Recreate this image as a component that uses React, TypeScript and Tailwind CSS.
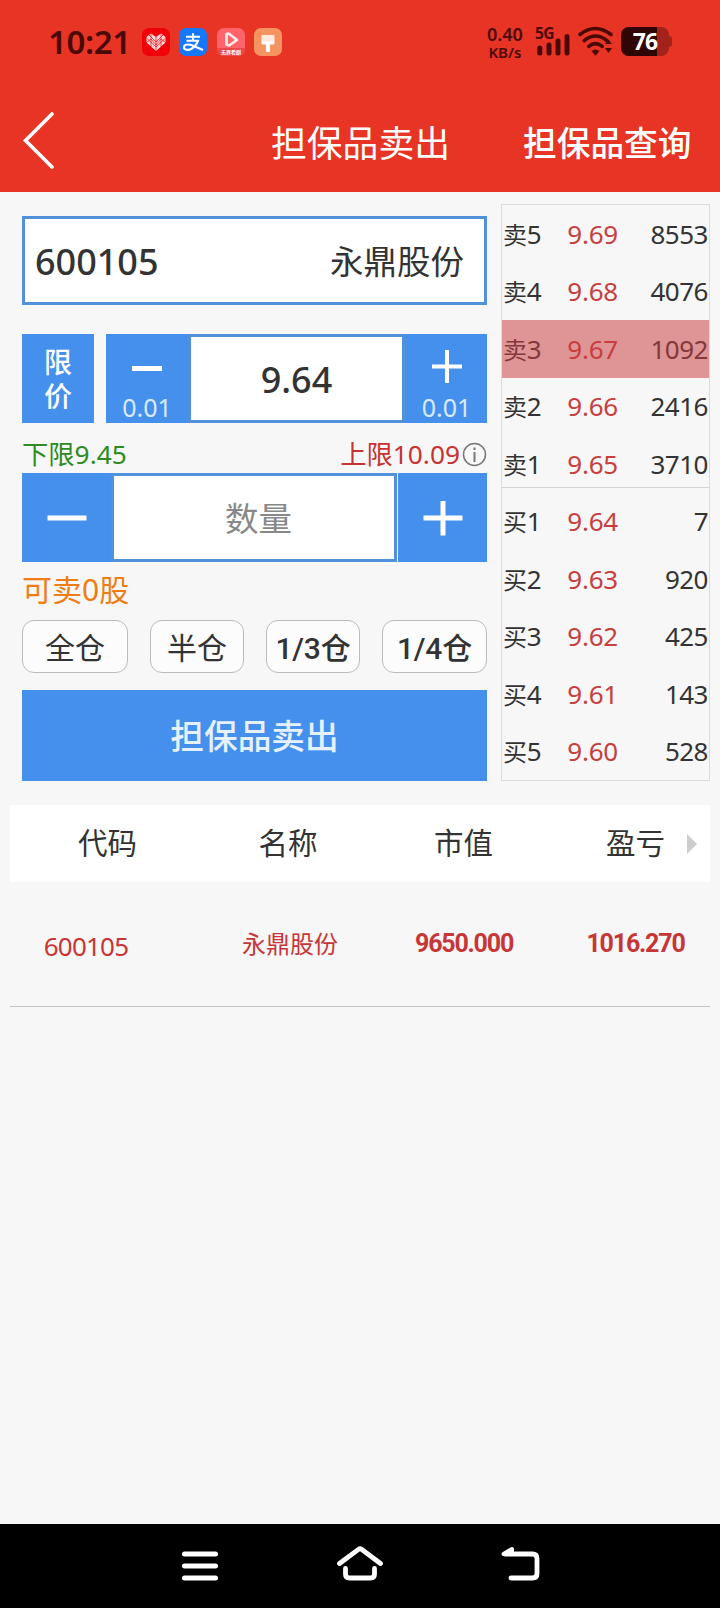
import React from "react";

const sells = [
  { label: "卖5", price: "9.69", volume: "8553" },
  { label: "卖4", price: "9.68", volume: "4076" },
  { label: "卖3", price: "9.67", volume: "1092", active: true },
  { label: "卖2", price: "9.66", volume: "2416" },
  { label: "卖1", price: "9.65", volume: "3710" },
];

const buys = [
  { label: "买1", price: "9.64", volume: "7" },
  { label: "买2", price: "9.63", volume: "920" },
  { label: "买3", price: "9.62", volume: "425" },
  { label: "买4", price: "9.61", volume: "143" },
  { label: "买5", price: "9.60", volume: "528" },
];

type Quote = { label: string; price: string; volume: string; active?: boolean };

function StatusBar() {
  return (
    <div className="flex h-[84px] items-start text-[#4a0905]">
      <div className="ml-[48px] mt-[22px] w-[80px] whitespace-nowrap text-[33px] leading-[40px] font-semibold tracking-[-0.4px]">10:21</div>
      <div className="ml-[14px] mt-[28px] flex gap-[9.3px]">
        <svg width="28" height="28" viewBox="0 0 28 28">
          <rect width="28" height="28" rx="7" fill="#f00109" />
          <path d="M14 23 4.500 14.500V9L9 5.500 14 9l5-3.500L23.500 9v5.500Z" fill="#ffd9d9" />
          <path d="m4.500 10 9.500 9 9.500-9M7 7l7 7 7-7M14 9v14M4.500 14.500 9 11l5 6 5-6 4.500 3.500M9 6v13M19 6v13" fill="none" stroke="#f00109" strokeWidth="0.7" />
        </svg>
        <svg width="28" height="28" viewBox="0 0 28 28">
          <rect width="28" height="28" rx="7" fill="#1677ff" />
          <path d="M7 8.700h14M14 5.200v7M7.500 12.700H19c-1.200 3.600-3.200 6-6 7.800-3.200 2-8 1.900-8-1.200 0-3.400 5-3.400 9-1.600l10 4.300" fill="none" stroke="#fff" strokeWidth="2.100" />
        </svg>
        <svg width="28" height="28" viewBox="0 0 28 28">
          <rect width="28" height="28" rx="7" fill="#ff646d" />
          <path d="M0 20h28v1a7 7 0 0 1-7 7H7a7 7 0 0 1-7-7Z" fill="#e9474c" />
          <path d="M9.500 6v10.500l2.500 1 8-5.500-8.500-6.500Z" fill="none" stroke="#ffeaea" strokeWidth="2.700" strokeLinejoin="round" />
          <text x="14" y="26.300" fontSize="5" fontWeight="700" fill="#fff" textAnchor="middle">无界看剧</text>
        </svg>
        <svg width="28" height="28" viewBox="0 0 28 28">
          <rect width="28" height="28" rx="7" fill="#f69461" />
          <path d="M7.500 7h13v7h-13Z" fill="#ffe9de" />
          <path d="M7.500 13.500h13V15q0 1.500-1.500 1.500h-3V23q0 1-1 1h-2q-1 0-1-1v-6.500H9q-1.500 0-1.500-1.500Z" fill="#fff" />
        </svg>
      </div>
      <div className="ml-[204.500px] mt-[25px] w-[37px] text-center font-semibold">
        <div className="text-[18px] leading-[18px]">0.40</div>
        <div className="whitespace-nowrap text-[15px] leading-[18px]">KB/s</div>
      </div>
      <svg className="ml-[11px] mt-[22px] overflow-visible" width="39" height="36" viewBox="-1 -4 39 36">
        <text x="0" y="12.500" fontSize="15.500" fontWeight="700" fill="#4a0905" letterSpacing="-0.500">5G</text>
        <path d="M4.800 22v5M14 19v8M23 15v12M32 10.500v16.500" stroke="#4a0905" strokeWidth="5" strokeLinecap="round" />
      </svg>
      <svg className="ml-[4px] mt-[26px]" width="38" height="32" viewBox="0 0 38 32">
        <path d="M3 8.500q15-12 31 0M7.300 14.500q11.200-9 22.400 0M11.800 20.300q6.700-5.500 13.400 0" fill="none" stroke="#4a0905" strokeWidth="3.600" strokeLinecap="round" />
        <path d="M14.500 25q4-3 8 0l-4 4.800ZM28 18l3.500-4.500L35 18ZM28 22h7l-3.500 5Z" fill="#4a0905" />
      </svg>
      <div className="ml-[6px] mt-[27px] flex items-center">
        <div className="flex h-[29px] w-[48px] overflow-hidden rounded-[8px] bg-[#a3221b]">
          <div className="flex h-[29px] w-[36px] items-center justify-end bg-[#300604] text-[23px] leading-[29px] font-bold tracking-[-0.8px] text-white">76</div>
        </div>
        <div className="h-[11px] w-[3px] rounded-r-[3px] bg-[#a3221b]" />
      </div>
    </div>
  );
}

function QuoteRow({ q }: { q: Quote }) {
  return (
    <div className={`flex h-[57.5px] items-center pt-px text-[26px] tracking-[-0.2px] ${q.active ? "bg-[#df9495] text-[#84383b]" : "text-[#333]"}`}>
      <span className="w-[40px] pl-px whitespace-nowrap"><span className="text-[24px]">{q.label[0]}</span>{q.label[1]}</span>
      <span className="w-[76px] text-right text-[#c73e3e]">{q.price}</span>
      <span className="flex-1 pr-[1px] text-right tracking-[-0.5px]">{q.volume}</span>
    </div>
  );
}

function Sign({ plus, wide }: { plus?: boolean; wide?: boolean }) {
  return wide ? (
    <svg width="40" height="36" viewBox="0 0 40 36">
      <path d={plus ? "M.5 18h39M20 1v34.500" : "M.5 18h39"} stroke="#fff" strokeWidth="5" fill="none" />
    </svg>
  ) : (
    <svg width="30" height="34" viewBox="0 0 30 34">
      <path d={plus ? "M0 17.500h30M15 1v33" : "M0 19.500h30"} stroke="#fff" strokeWidth={plus ? 4 : 5} fill="none" />
    </svg>
  );
}

export default function App() {
  return (
    <div className="flex h-[1608px] w-[720px] flex-col bg-[#f7f7f7] font-['Noto_Sans','Noto_Sans_CJK_SC',sans-serif] text-[#333]">
      <header className="h-[192px] bg-[#e83424]">
        <StatusBar />
        <div className="flex h-[108px] items-center text-white">
          <svg className="ml-[22px] mt-[4px]" width="34" height="58" viewBox="0 0 34 58">
            <path d="M30 3 3.500 29.500 30 56" fill="none" stroke="#fff" strokeWidth="3.600" strokeLinecap="round" />
          </svg>
          <h1 className="mt-[10px] ml-[215px] w-[180px] whitespace-nowrap text-[35.8px] leading-[50px]">担保品卖出</h1>
          <span className="mt-[10px] ml-[72px] whitespace-nowrap text-[33.7px] leading-[50px] font-medium">担保品查询</span>
        </div>
      </header>

      <main className="flex-1">
        <div className="flex pt-[12px] pr-[10px] pl-[22px]">
          <section className="w-[465px] pt-[12px]">
            <div className="flex h-[89px] items-center justify-between border-[3px] border-[#5190da] bg-white pt-[2px] pr-[20px] pl-[10px]">
              <span className="text-[36px] font-medium">600105</span>
              <span className="text-[33.5px]">永鼎股份</span>
            </div>

            <div className="mt-[29px] flex h-[89px]">
              <div className="flex w-[72px] items-center justify-center bg-[#4690ed] pt-px text-[28px] leading-[34px] font-medium text-white">
                <span className="w-[28px]">限价</span>
              </div>
              <div className="ml-[12px] flex w-[82px] flex-col items-center bg-[#4690ed] pt-[15px] text-[#d9eaff]">
                <Sign />
                <span className="mt-[8px] text-[25px] leading-[32px]">0.01</span>
              </div>
              <div className="flex w-[217px] items-center justify-center border-[3px] border-[#5190da] bg-white pt-[2px] text-[36px] font-medium">9.64</div>
              <div className="flex flex-1 flex-col items-center bg-[#4690ed] pt-[15px] pl-px text-[#d9eaff]">
                <Sign plus />
                <span className="mt-[8px] text-[25px] leading-[32px]">0.01</span>
              </div>
            </div>

            <div className="flex h-[50px] items-center justify-between pt-[13px] text-[26.3px] leading-[37px]">
              <span className="text-[#2e8b22]">下限9.45</span>
              <span className="flex items-center text-[#c73232]">
                上限10.09
                <svg className="ml-[2px] -mt-px" width="25" height="25" viewBox="0 0 25 25">
                  <circle cx="12.500" cy="12.500" r="11" fill="none" stroke="#777" strokeWidth="1.500" />
                  <path d="M12.500 10v10M12.500 5.500v2.500" stroke="#777" strokeWidth="2" />
                </svg>
              </span>
            </div>

            <div className="flex h-[89px]">
              <div className="flex w-[89px] items-center justify-center bg-[#4690ed]"><Sign wide /></div>
              <div className="flex w-[286px] items-center justify-center border-[3px] border-[#5190da] bg-white pt-[2px] pl-[9px] text-[33.5px] text-[#888]">数量</div>
              <div className="ml-[1px] flex flex-1 items-center justify-center bg-[#4690ed]"><Sign wide plus /></div>
            </div>

            <div className="h-[58px] pt-[8px] text-[30px] leading-[40px] text-[#ef7d15]">可卖0股</div>

            <div className="flex h-[53px] justify-between text-[30px]">
              <button className="w-[106px] rounded-[12px] border border-[#bbb] bg-[#fcfcfc] pt-[2px]">全仓</button>
              <button className="w-[94px] rounded-[12px] border border-[#bbb] bg-[#fcfcfc] pt-[2px]">半仓</button>
              <button className="w-[94px] rounded-[12px] border border-[#bbb] bg-[#fcfcfc] pt-[3px] font-['Roboto','Noto_Sans_CJK_SC',sans-serif] font-medium tracking-[-0.2px]">1/3仓</button>
              <button className="w-[105px] rounded-[12px] border border-[#bbb] bg-[#fcfcfc] pt-[3px] font-['Roboto','Noto_Sans_CJK_SC',sans-serif] font-medium tracking-[-0.2px]">1/4仓</button>
            </div>

            <button className="mt-[17px] block h-[91px] w-full bg-[#4690ed] pt-[2px] text-[33.7px] font-medium text-[#e6f1ff]">担保品卖出</button>
          </section>

          <section className="ml-[14px] h-[577px] w-[209px] border border-[#dcdcdc]">
            <div className="h-[282px]">
              {sells.map((q) => <QuoteRow key={q.label} q={q} />)}
            </div>
            <div className="border-t border-[#d3d3d3] pt-[4.5px]">
              {buys.map((q) => <QuoteRow key={q.label} q={q} />)}
            </div>
          </section>
        </div>

        <section className="mx-[10px] mt-[24px]">
          <div className="relative flex h-[77px] items-center bg-white text-[29.5px]">
            <span className="w-[195px] text-center">代码</span>
            <span className="w-[166px] text-center">名称</span>
            <span className="w-[185px] text-center">市值</span>
            <span className="flex-1 pl-[5px] text-center">盈亏</span>
            <svg className="absolute right-[13px]" width="10" height="20" viewBox="0 0 10 20">
              <path d="M0 0 10 10 0 20Z" fill="#ccc" />
            </svg>
          </div>
          <div className="flex h-[125px] items-center border-b border-[#c4c4c4] text-[24px] text-[#c73636]">
            <span className="w-[152px] pt-[5px] text-center text-[26px] tracking-[-0.8px]">600105</span>
            <span className="w-[256px] pb-px text-center">永鼎股份</span>
            <span className="w-[92px] whitespace-nowrap font-['Roboto',sans-serif] text-[25px] font-bold tracking-[-1.2px]"><span className="-mx-[3px]">9650.000</span></span>
            <span className="flex-1 pl-[51px] text-center font-['Roboto',sans-serif] text-[25px] font-bold tracking-[-1.2px]">1016.270</span>
          </div>
        </section>
      </main>

      <nav className="flex h-[84px] items-center bg-black">
        <svg className="ml-[182px]" width="36" height="84" viewBox="0 0 36 84">
          <path d="M2.500 30h31M2.500 42h31M2.500 54h31" stroke="#fff" strokeWidth="5" strokeLinecap="round" />
        </svg>
        <svg className="ml-[119px]" width="46" height="84" viewBox="0 0 46 84">
          <path d="M2.500 39.500 21.500 25.300q1.500-1.100 3 0L43.500 39.500M8.500 44.500V50q0 4 4 4h21q4 0 4-4v-5.500" fill="none" stroke="#fff" strokeWidth="4.800" strokeLinecap="round" />
        </svg>
        <svg className="ml-[118px]" width="40" height="84" viewBox="0 0 40 84">
          <path d="M4 30h27.500q4.500 0 4.500 4.500v15q0 4.500-4.500 4.500H10" fill="none" stroke="#fff" strokeWidth="4.800" strokeLinecap="round" strokeLinejoin="round" />
          <path d="M2.500 30 11 25v5Z" fill="#fff" stroke="#fff" strokeWidth="4" strokeLinejoin="round" />
        </svg>
      </nav>
    </div>
  );
}
